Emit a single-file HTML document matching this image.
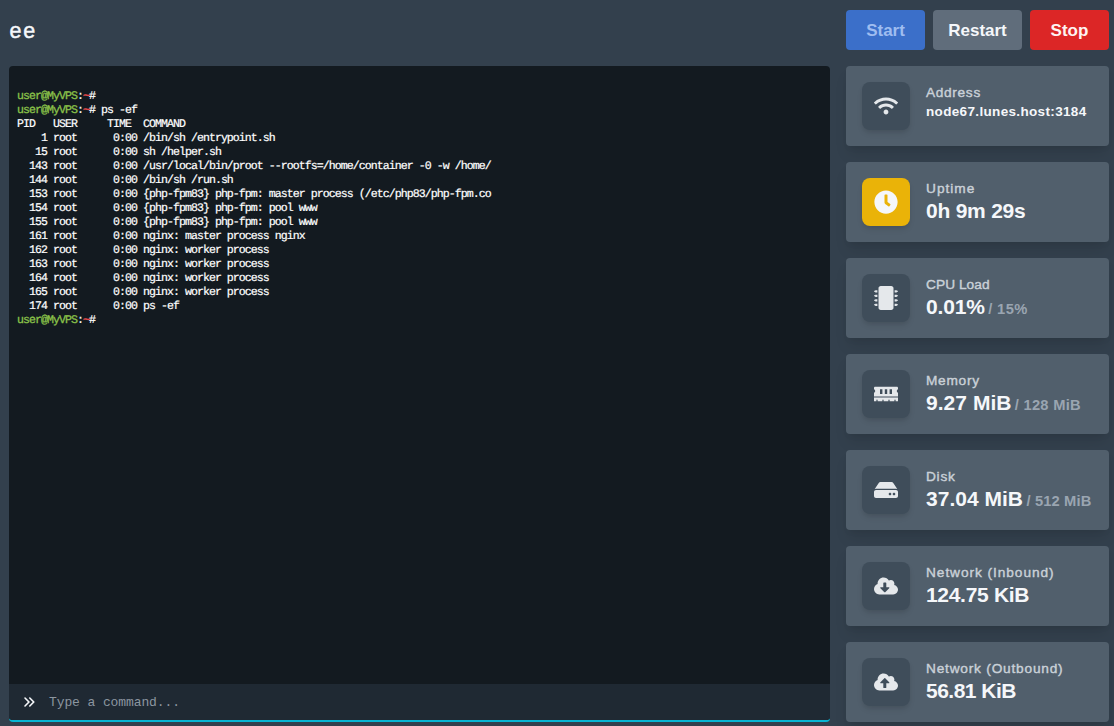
<!DOCTYPE html>
<html>
<head>
<meta charset="utf-8">
<style>
*{box-sizing:border-box;margin:0;padding:0}
html,body{width:1114px;height:726px;overflow:hidden}
body{background:#33404d;font-family:"Liberation Sans",sans-serif;position:relative;color:#f5f7fa}
.title{position:absolute;left:9.4px;top:12px;font-size:21.5px;line-height:39px;font-weight:400;color:#f5f7fa;letter-spacing:1.9px;-webkit-text-stroke:0.45px #f5f7fa}
.btn{position:absolute;top:10px;height:40px;border-radius:4px;font-size:17px;font-weight:700;line-height:41px;text-align:center;color:#fff}
.b-start{left:846px;width:79px;background:#3b6fc9;color:#9fbdf0}
.b-restart{left:933px;width:89px;background:#606d7b;color:#f5f7fa}
.b-stop{left:1030px;width:79px;background:#dc2626;color:#fef2f2}
.term{position:absolute;left:9px;top:66px;width:821px;height:618px;background:#131a20;border-radius:4px 4px 0 0}
.cmd{position:absolute;left:9px;top:684px;width:821px;height:38px;background:#1f2933;border-bottom:2px solid #06b6d4;border-radius:0 0 4px 4px}
.cmd .ph{position:absolute;left:40px;top:1px;line-height:36px;font-family:"Liberation Mono",monospace;font-size:13px;letter-spacing:-0.1px;color:#8c96a0;white-space:pre}
.cmd svg{position:absolute;left:12px;top:10px;width:16px;height:16px;fill:#f5f7fa}
.lines{position:absolute;left:8px;top:24px;font-family:"Liberation Mono",monospace;font-size:11.6px;letter-spacing:-0.961px;line-height:14px;color:#fff;white-space:pre;-webkit-text-stroke:0.2px;text-rendering:geometricPrecision}
.g{color:#8bc34a;-webkit-text-stroke:0.3px #8bc34a}.r{color:#e54b4b;-webkit-text-stroke:0.5px #e54b4b}
.card{position:absolute;left:846px;width:263px;height:80px;background:#515f6c;border-radius:4px;box-shadow:0 10px 15px -3px rgba(0,0,0,.1),0 4px 6px -2px rgba(0,0,0,.05)}
.icon{position:absolute;left:16px;top:16px;width:48px;height:48px;border-radius:8px;background:#3f4d5a;box-shadow:0 4px 6px -1px rgba(0,0,0,.1),0 2px 4px -1px rgba(0,0,0,.06)}
.icon svg{position:absolute;left:12px;top:12px;width:24px;height:24px;fill:#e5e8eb}
.lab{position:absolute;left:80px;top:18px;font-size:13.7px;line-height:17px;color:#cad1d8;white-space:nowrap;-webkit-text-stroke:0.4px #cad1d8}
.val{position:absolute;left:80px;top:35px;font-size:21px;line-height:28px;font-weight:700;color:#f5f7fa;white-space:nowrap}
.val .lim{font-size:14.7px;font-weight:700;color:#9aa5b1}
</style>
</head>
<body>
<div class="title">ee</div>
<div class="btn b-start">Start</div>
<div class="btn b-restart">Restart</div>
<div class="btn b-stop">Stop</div>

<div class="term"><div class="lines"><span class="g">user@MyVPS</span>:<span class="r">~</span>#
<span class="g">user@MyVPS</span>:<span class="r">~</span># ps -ef
PID   USER     TIME  COMMAND
    1 root      0:00 /bin/sh /entrypoint.sh
   15 root      0:00 sh /helper.sh
  143 root      0:00 /usr/local/bin/proot --rootfs=/home/container -0 -w /home/
  144 root      0:00 /bin/sh /run.sh
  153 root      0:00 {php-fpm83} php-fpm: master process (/etc/php83/php-fpm.co
  154 root      0:00 {php-fpm83} php-fpm: pool www
  155 root      0:00 {php-fpm83} php-fpm: pool www
  161 root      0:00 nginx: master process nginx
  162 root      0:00 nginx: worker process
  163 root      0:00 nginx: worker process
  164 root      0:00 nginx: worker process
  165 root      0:00 nginx: worker process
  174 root      0:00 ps -ef
<span class="g">user@MyVPS</span>:<span class="r">~</span>#</div></div>
<div class="cmd"><svg viewBox="0 0 20 20"><path fill-rule="evenodd" d="M10.293 15.707a1 1 0 010-1.414L14.586 10l-4.293-4.293a1 1 0 111.414-1.414l5 5a1 1 0 010 1.414l-5 5a1 1 0 01-1.414 0z" clip-rule="evenodd"/><path fill-rule="evenodd" d="M4.293 15.707a1 1 0 010-1.414L8.586 10 4.293 5.707a1 1 0 011.414-1.414l5 5a1 1 0 010 1.414l-5 5a1 1 0 01-1.414 0z" clip-rule="evenodd"/></svg><div class="ph">Type a command...</div></div>

<div class="card" style="top:66px"><div class="icon"><svg viewBox="0 0 640 512"><path d="M634.91 154.88C457.74-8.99 182.19-8.93 5.09 154.88c-6.66 6.16-6.79 16.59-.35 22.98l34.24 33.97c6.14 6.1 16.02 6.23 22.4.38 145.92-133.68 371.3-133.71 517.25 0 6.38 5.85 16.26 5.71 22.4-.38l34.24-33.97c6.43-6.39 6.3-16.82-.36-22.98zM320 352c-35.35 0-64 28.65-64 64s28.65 64 64 64 64-28.65 64-64-28.65-64-64-64zm202.67-83.59c-115.26-101.93-290.21-101.82-405.34 0-6.9 6.1-7.12 16.69-.57 23.15l34.44 33.99c6 5.92 15.66 6.32 22.05.8 83.95-72.57 209.74-72.41 293.49 0 6.39 5.52 16.05 5.13 22.05-.8l34.44-33.99c6.56-6.46 6.33-17.06-.56-23.15z"/></svg></div><div class="lab" style="letter-spacing:0.67px">Address</div><div class="val" style="font-size:13.5px;letter-spacing:0.34px;top:32px">node67.lunes.host:3184</div></div>
<div class="card" style="top:162px"><div class="icon" style="background:#eab308"><svg style="fill:#f5f7fa" viewBox="0 0 512 512"><path d="M256,8C119,8,8,119,8,256S119,504,256,504,504,393,504,256,393,8,256,8Zm92.49,313h0l-20,25a16,16,0,0,1-22.49,2.5h0l-67-49.72a40,40,0,0,1-15-31.23V112a16,16,0,0,1,16-16h32a16,16,0,0,1,16,16V256l58,42.5A16,16,0,0,1,348.49,321Z"/></svg></div><div class="lab" style="letter-spacing:1.00px">Uptime</div><div class="val"><span class="v" style="letter-spacing:-0.23px">0h 9m 29s</span></div></div>
<div class="card" style="top:258px"><div class="icon"><svg viewBox="0 0 512 512"><path d="M416 48v416c0 26.51-21.49 48-48 48H144c-26.51 0-48-21.49-48-48V48c0-26.51 21.49-48 48-48h224c26.51 0 48 21.49 48 48zm96 58v12a6 6 0 0 1-6 6h-18v6a6 6 0 0 1-6 6h-42V88h42a6 6 0 0 1 6 6v6h18a6 6 0 0 1 6 6zm0 96v12a6 6 0 0 1-6 6h-18v6a6 6 0 0 1-6 6h-42v-48h42a6 6 0 0 1 6 6v6h18a6 6 0 0 1 6 6zm0 96v12a6 6 0 0 1-6 6h-18v6a6 6 0 0 1-6 6h-42v-48h42a6 6 0 0 1 6 6v6h18a6 6 0 0 1 6 6zm0 96v12a6 6 0 0 1-6 6h-18v6a6 6 0 0 1-6 6h-42v-48h42a6 6 0 0 1 6 6v6h18a6 6 0 0 1 6 6zM30 376h42v48H30a6 6 0 0 1-6-6v-6H6a6 6 0 0 1-6-6v-12a6 6 0 0 1 6-6h18v-6a6 6 0 0 1 6-6zm0-96h42v48H30a6 6 0 0 1-6-6v-6H6a6 6 0 0 1-6-6v-12a6 6 0 0 1 6-6h18v-6a6 6 0 0 1 6-6zm0-96h42v48H30a6 6 0 0 1-6-6v-6H6a6 6 0 0 1-6-6v-12a6 6 0 0 1 6-6h18v-6a6 6 0 0 1 6-6zm0-96h42v48H30a6 6 0 0 1-6-6v-6H6a6 6 0 0 1-6-6v-12a6 6 0 0 1 6-6h18v-6a6 6 0 0 1 6-6z"/></svg></div><div class="lab" style="letter-spacing:0.06px">CPU Load</div><div class="val"><span class="v" style="letter-spacing:-0.18px">0.01%</span><span class="lim" style="margin-left:3.6px;letter-spacing:0.35px">/ 15%</span></div></div>
<div class="card" style="top:354px"><div class="icon"><svg viewBox="0 0 640 512"><path d="M640 130.94V96c0-17.67-14.33-32-32-32H32C14.33 64 0 78.33 0 96v34.94c18.6 6.61 32 24.19 32 45.06s-13.4 38.45-32 45.06V320h640v-98.94c-18.6-6.61-32-24.19-32-45.06s13.4-38.45 32-45.06zM224 256h-64V128h64v128zm128 0h-64V128h64v128zm128 0h-64V128h64v128zM0 448h64v-26.67c0-8.84 7.16-16 16-16s16 7.16 16 16V448h128v-26.67c0-8.84 7.16-16 16-16s16 7.16 16 16V448h128v-26.67c0-8.84 7.16-16 16-16s16 7.16 16 16V448h128v-26.67c0-8.84 7.16-16 16-16s16 7.16 16 16V448h64v-96H0v96z"/></svg></div><div class="lab" style="letter-spacing:0.72px">Memory</div><div class="val"><span class="v" style="letter-spacing:0.04px">9.27 MiB</span><span class="lim" style="margin-left:3.2px;letter-spacing:0.28px">/ 128 MiB</span></div></div>
<div class="card" style="top:450px"><div class="icon"><svg viewBox="0 0 576 512"><path d="M576 304v96c0 26.51-21.49 48-48 48H48c-26.51 0-48-21.49-48-48v-96c0-26.51 21.49-48 48-48h480c26.51 0 48 21.49 48 48zm-48-80a79.557 79.557 0 0 1 30.777 6.165L462.25 85.374A48.003 48.003 0 0 0 422.311 64H153.689a48 48 0 0 0-39.938 21.374L17.223 230.165A79.557 79.557 0 0 1 48 224h480zm-48 96c-17.673 0-32 14.327-32 32s14.327 32 32 32 32-14.327 32-32-14.327-32-32-32zm-96 0c-17.673 0-32 14.327-32 32s14.327 32 32 32 32-14.327 32-32-14.327-32-32-32z"/></svg></div><div class="lab" style="letter-spacing:0.73px">Disk</div><div class="val"><span class="v" style="letter-spacing:0.01px">37.04 MiB</span><span class="lim" style="margin-left:3.5px;letter-spacing:0.14px">/ 512 MiB</span></div></div>
<div class="card" style="top:546px"><div class="icon"><svg viewBox="0 0 640 512"><path d="M537.6 226.6c4.1-10.7 6.4-22.4 6.4-34.6 0-53-43-96-96-96-19.7 0-38.1 6-53.3 16.2C367 64.2 315.3 32 256 32c-88.4 0-160 71.6-160 160 0 2.7.1 5.4.2 8.1C40.2 219.8 0 273.2 0 336c0 79.5 64.5 144 144 144h368c70.7 0 128-57.3 128-128 0-61.9-44-113.6-102.4-125.4zm-132.9 88.7L299.3 420.7c-6.2 6.2-16.4 6.2-22.6 0L171.3 315.3c-10.1-10.1-2.9-27.3 11.3-27.3H248V176c0-8.8 7.2-16 16-16h48c8.8 0 16 7.2 16 16v112h65.4c14.2 0 21.4 17.2 11.3 27.3z"/></svg></div><div class="lab" style="letter-spacing:0.94px">Network (Inbound)</div><div class="val"><span class="v" style="letter-spacing:-0.31px">124.75 KiB</span></div></div>
<div class="card" style="top:642px"><div class="icon"><svg viewBox="0 0 640 512"><path d="M537.6 226.6c4.1-10.7 6.4-22.4 6.4-34.6 0-53-43-96-96-96-19.7 0-38.1 6-53.3 16.2C367 64.2 315.3 32 256 32c-88.4 0-160 71.6-160 160 0 2.7.1 5.4.2 8.1C40.2 219.8 0 273.2 0 336c0 79.5 64.5 144 144 144h368c70.7 0 128-57.3 128-128 0-61.9-44-113.6-102.4-125.4zM393.4 288H328v112c0 8.8-7.2 16-16 16h-48c-8.8 0-16-7.2-16-16V288h-65.400c-14.3 0-21.4-17.2-11.3-27.3l105.4-105.4c6.2-6.2 16.4-6.2 22.6 0l105.4 105.4c10.1 10.100 2.9 27.3-11.3 27.3z"/></svg></div><div class="lab" style="letter-spacing:0.79px">Network (Outbound)</div><div class="val"><span class="v" style="letter-spacing:-0.51px">56.81 KiB</span></div></div>
</body>
</html>
